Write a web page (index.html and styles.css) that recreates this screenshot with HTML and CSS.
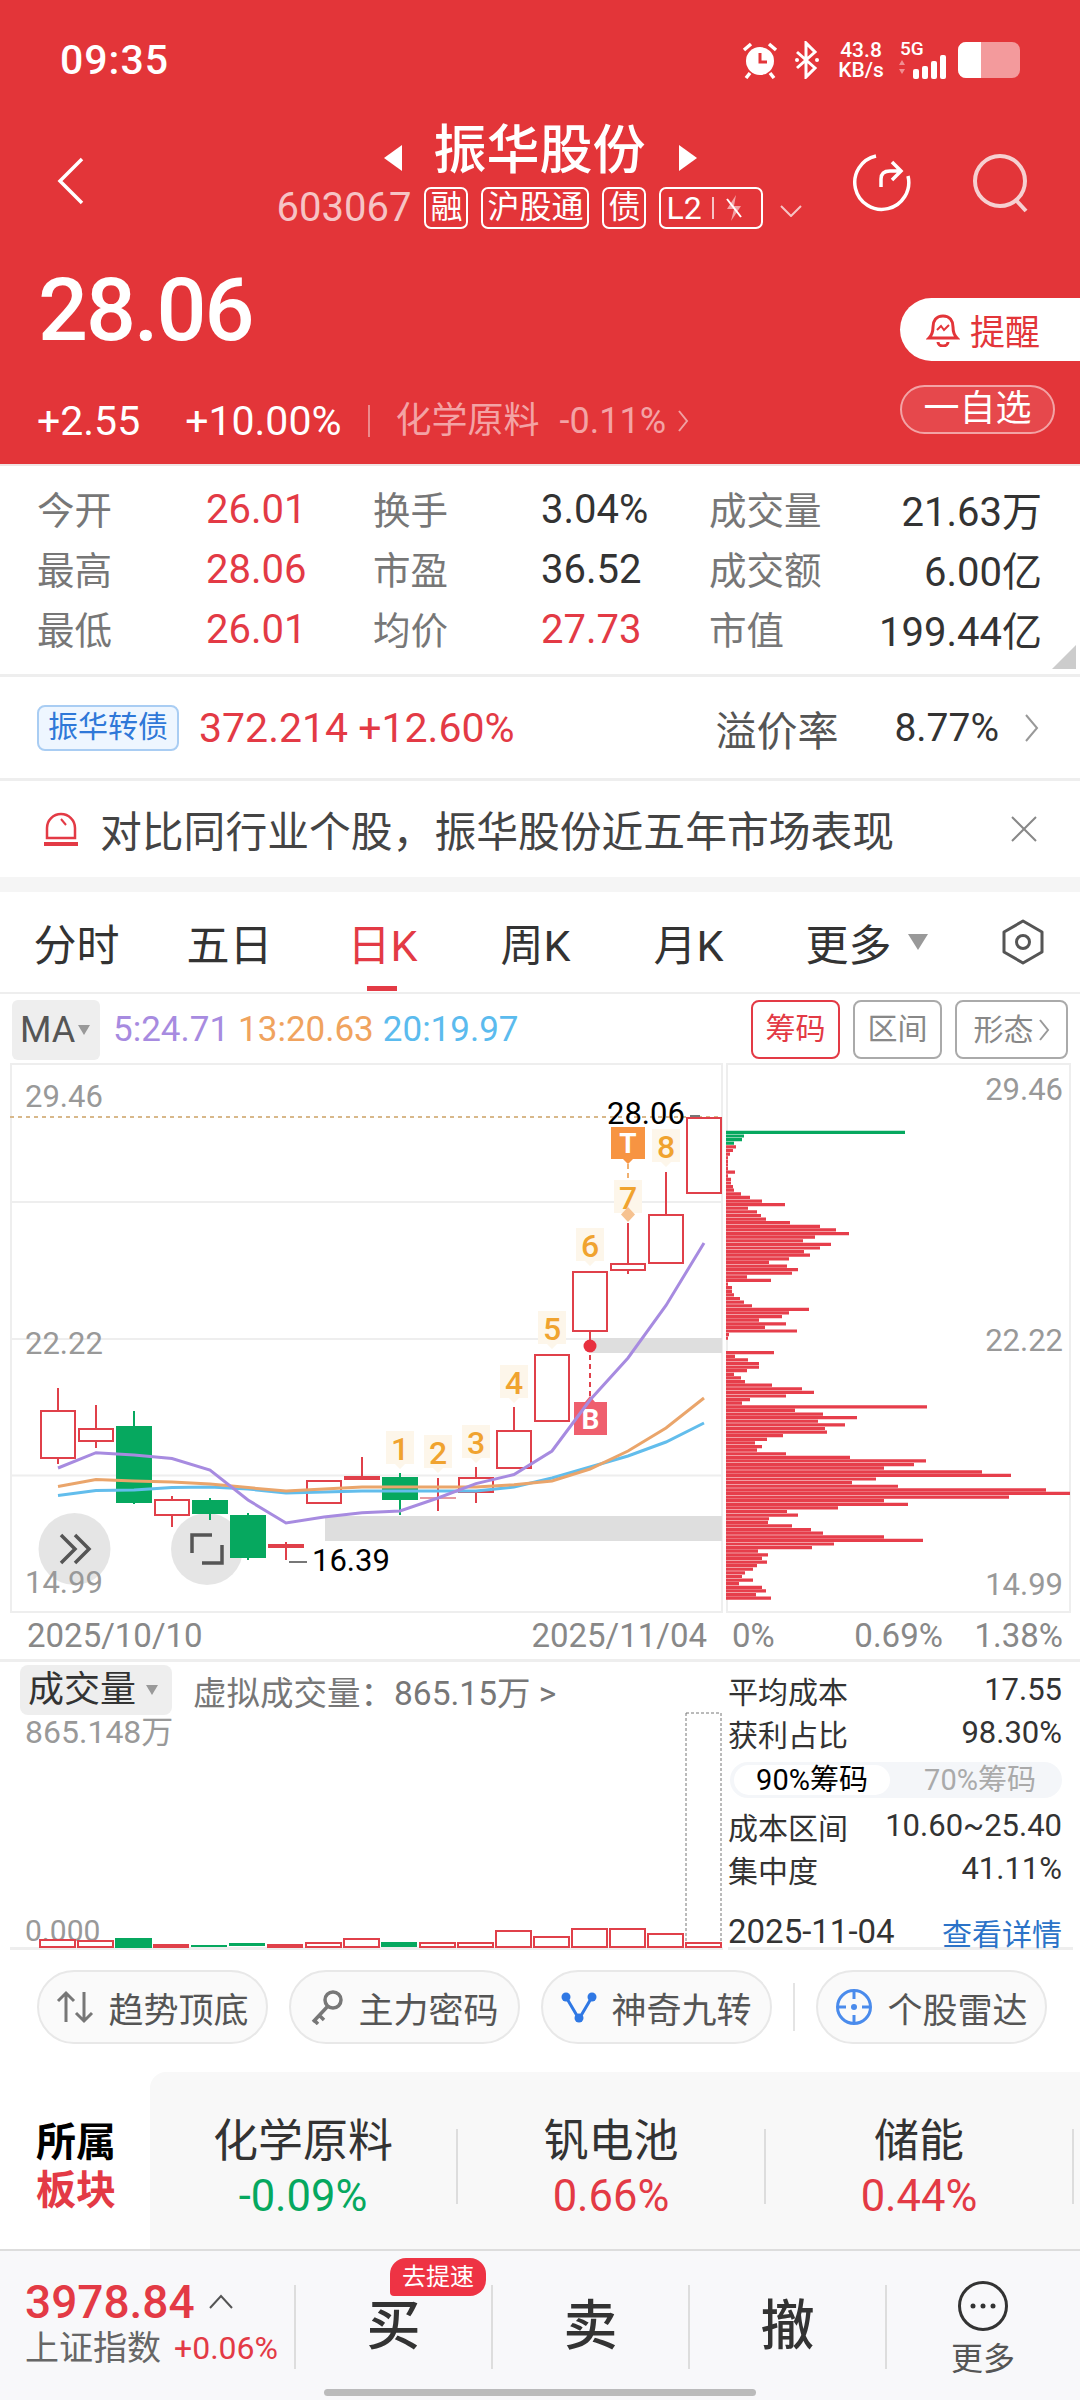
FILE: index.html
```html
<!DOCTYPE html>
<html lang="zh-CN">
<head>
    <meta charset="UTF-8">
    <meta name="viewport" content="width=device-width, initial-scale=1.0">
    <title>振华股份</title>
    <link rel="stylesheet" href="styles.css">
</head>
<body>
    <header class="top">
        <div class="status">
            <span class="clock">09:35</span>
            <div class="status-icons">
                <svg class="ic-alarm" width="38" height="38" viewBox="0 0 36 38"><circle cx="18" cy="20" r="14" fill="#fff"/><path d="M18 12v9h7" fill="none" stroke="#e33539" stroke-width="3"/><path d="M2 9l7-6M34 9l-7-6M8 32l-4 5M28 32l4 5" stroke="#fff" stroke-width="3.5" fill="none"/></svg>
                <svg class="ic-bt" width="26" height="38" viewBox="0 0 26 38"><path d="M3 11l18 16-9 9V2l9 9L3 27" fill="none" stroke="#fff" stroke-width="3"/><circle cx="3" cy="19" r="2" fill="#fff"/><circle cx="23" cy="19" r="2" fill="#fff"/></svg>
                <div class="speed"><b>43.8</b><b>KB/s</b></div>
                <div class="net">
                    <b>5G</b>
                    <svg width="54" height="24" viewBox="0 0 54 24"><path d="M1 10l3-5 3 5zM1 14l3 5 3-5z" fill="#f08f92"/><rect x="15" y="14" width="6" height="10" rx="2" fill="#fff"/><rect x="24" y="11" width="6" height="13" rx="2" fill="#fff"/><rect x="33" y="6" width="6" height="18" rx="2" fill="#fff"/><rect x="42" y="0" width="6" height="24" rx="2" fill="#fff"/></svg>
                </div>
                <div class="battery"><i></i></div>
            </div>
        </div>
        <div class="nav">
            <svg class="nav-back" width="28" height="48" viewBox="0 0 28 48"><path d="M25 2L3 24l22 22" fill="none" stroke="#fff" stroke-width="3.5"/></svg>
            <div class="nav-mid">
                <div class="title"><span class="tri-l"></span>振华股份<span class="tri-r"></span></div>
                <div class="sub">
                    <span class="code">603067</span>
                    <span class="tag">融</span>
                    <span class="tag">沪股通</span>
                    <span class="tag">债</span>
                    <span class="tag tag-l2">L2<em></em><svg width="20" height="28" viewBox="0 0 20 28"><path d="M12 1L3 15h7l-3 12 10-15h-7z" fill="#f4a0a3"/><path d="M3 5l14 18" stroke="#fff" stroke-width="2"/></svg></span>
                    <svg class="sub-caret" width="24" height="12" viewBox="0 0 24 12"><path d="M2 1l10 10L22 1" fill="none" stroke="#f6c4c5" stroke-width="2"/></svg>
                </div>
            </div>
            <div class="nav-right">
                <svg width="60" height="60" viewBox="0 0 60 60"><path d="M24 3a27 27 0 1 0 32 20" fill="none" stroke="#fff" stroke-width="3.5"/><path d="M29 34V26q0-8 9-8h9M40 9l9 9-9 9" fill="none" stroke="#fff" stroke-width="3.5"/></svg>
                <svg width="58" height="60" viewBox="0 0 58 60"><circle cx="28" cy="28" r="25" fill="none" stroke="#f6d0d1" stroke-width="4"/><path d="M43 46l11 12" stroke="#f6d0d1" stroke-width="4"/></svg>
            </div>
        </div>
        <div class="quote">
            <div class="quote-left">
                <div class="price">28.06</div>
                <div class="change">
                    <span>+2.55</span><span class="pct">+10.00%</span><em></em>
                    <span class="ind">化学原料</span><span class="ind-pct">-0.11%</span>
                    <svg width="12" height="24" viewBox="0 0 12 24"><path d="M2 2l8 10-8 10" fill="none" stroke="#f0a0a2" stroke-width="2"/></svg>
                </div>
            </div>
            <div class="quote-right">
                <div class="remind"><svg width="34" height="34" viewBox="0 0 34 34"><path d="M17 3c-7 0-10 5-10 11 0 5-1 8-4 11h28c-3-3-4-6-4-11 0-6-3-11-10-11z" fill="none" stroke="#e33539" stroke-width="3"/><path d="M12 29a5 4 0 0 0 10 0" fill="none" stroke="#e33539" stroke-width="3"/><path d="M11 17l4-4 3 4 5-5" fill="none" stroke="#e33539" stroke-width="2"/></svg>提醒</div>
                <div class="fav">一自选</div>
            </div>
        </div>
    </header>

    <section class="stats">
        <span class="lbl">今开</span><span class="red">26.01</span><span class="lbl">换手</span><span>3.04%</span><div class="last"><span class="lbl">成交量</span><span>21.63万</span></div>
        <span class="lbl">最高</span><span class="red">28.06</span><span class="lbl">市盈</span><span>36.52</span><div class="last"><span class="lbl">成交额</span><span>6.00亿</span></div>
        <span class="lbl">最低</span><span class="red">26.01</span><span class="lbl">均价</span><span class="red">27.73</span><div class="last"><span class="lbl">市值</span><span>199.44亿</span></div>
        <i class="corner"></i>
    </section>

    <section class="bond">
        <span class="bond-tag">振华转债</span>
        <span class="bond-val">372.214 +12.60%</span>
        <span class="bond-lbl">溢价率</span>
        <span class="bond-rate">8.77%</span>
        <svg width="16" height="30" viewBox="0 0 16 30"><path d="M2 2l11 13L2 28" fill="none" stroke="#999" stroke-width="2"/></svg>
    </section>

    <section class="notice">
        <svg width="38" height="40" viewBox="0 0 38 40"><path d="M5 29V19a14 14 0 0 1 28 0v10z" fill="none" stroke="#e33a45" stroke-width="2.5"/><path d="M2 35h34" stroke="#e33a45" stroke-width="4"/><path d="M19 10l5 6" stroke="#e33a45" stroke-width="2"/></svg>
        <span class="notice-text">对比同行业个股，振华股份近五年市场表现</span>
        <svg width="28" height="28" viewBox="0 0 28 28"><path d="M2 2l24 24M26 2L2 26" stroke="#888" stroke-width="2"/></svg>
    </section>

    <nav class="tabs">
        <span class="tab">分时</span>
        <span class="tab">五日</span>
        <span class="tab tab-on">日K</span>
        <span class="tab">周K</span>
        <span class="tab">月K</span>
        <span class="tab tab-more">更多<i class="caret"></i></span>
        <svg width="44" height="46" viewBox="0 0 44 46"><path d="M22 2l19 11v20L22 44 3 33V13z" fill="none" stroke="#555" stroke-width="3" stroke-linejoin="round"/><circle cx="22" cy="23" r="6.5" fill="none" stroke="#555" stroke-width="3"/></svg>
    </nav>

    <div class="ma-row">
        <div class="ma-box">MA<i class="caret caret-sm"></i></div>
        <span class="ma5">5:24.71</span>
        <span class="ma13">13:20.63</span>
        <span class="ma20">20:19.97</span>
        <div class="ma-btns">
            <span class="mbtn mbtn-on">筹码</span>
            <span class="mbtn">区间</span>
            <span class="mbtn mbtn-wide">形态<svg width="12" height="24" viewBox="0 0 12 24"><path d="M2 2l8 10-8 10" fill="none" stroke="#999" stroke-width="2"/></svg></span>
        </div>
    </div>

    <div class="kline">
        <svg class="kline-main" width="713" height="550" viewBox="10 1063 713 550">
            <rect class="frame" x="11" y="1064" width="711" height="548"/>
            <path class="grid" d="M10 1202H722M10 1339H722M10 1475.5H722"/>
            <path class="limit" d="M10 1117H722"/>
            <rect class="zone" x="325" y="1516" width="397" height="25"/>
            <rect class="zone" x="591" y="1338" width="131" height="15"/>
            <circle class="round" cx="74.5" cy="1549" r="36"/>
            <circle class="round" cx="207" cy="1549" r="36"/>
            <path class="wick-g" d="M134 1411V1504M210 1498V1520M248 1513V1560M400 1473V1515"/>
            <path class="wick-r" d="M58 1388V1411M58 1458V1464M96 1405V1429M96 1441V1448M172 1496V1500M172 1515V1527M286 1542V1560M362 1457V1476M438 1478V1511M476 1467V1478M476 1492V1503M514 1407V1431M590 1331V1340M628 1223V1264M628 1270V1274M666 1172V1215"/>
            <path class="wick-p" d="M420 1498H456"/>
            <g class="body-up">
                <rect x="41" y="1411" width="34" height="47"/>
                <rect x="79" y="1429" width="34" height="12"/>
                <rect x="155" y="1500" width="34" height="15"/>
                <rect x="307" y="1481" width="34" height="22"/>
                <rect x="459" y="1478" width="34" height="14"/>
                <rect x="497" y="1431" width="34" height="37"/>
                <rect x="535" y="1355" width="34" height="66"/>
                <rect x="573" y="1272" width="34" height="59"/>
                <rect x="611" y="1264" width="34" height="6"/>
                <rect x="649" y="1215" width="34" height="48"/>
                <rect x="687" y="1118" width="34" height="75"/>
            </g>
            <g class="body-red">
                <rect x="268" y="1544" width="36" height="4"/>
                <rect x="344" y="1476" width="36" height="4"/>
            </g>
            <g class="body-down">
                <rect x="116" y="1426" width="36" height="77"/>
                <rect x="192" y="1500" width="36" height="14"/>
                <rect x="230" y="1515" width="36" height="43"/>
                <rect x="382" y="1477" width="36" height="23"/>
            </g>
            <path class="dash-o" d="M628 1164V1208"/>
            <path class="dash-r" d="M590 1346V1398"/>
            <g transform="translate(400,1449)"><path class="tip" d="M-14-18h28v33h-9l-5 5-5-5h-9z"/><text class="seq" y="11">1</text></g>
            <g transform="translate(438,1453)"><path class="tip" d="M-14-18h28v33h-9l-5 5-5-5h-9z"/><text class="seq" y="11">2</text></g>
            <g transform="translate(476,1443)"><path class="tip" d="M-14-18h28v33h-9l-5 5-5-5h-9z"/><text class="seq" y="11">3</text></g>
            <g transform="translate(514,1383)"><path class="tip" d="M-14-18h28v33h-9l-5 5-5-5h-9z"/><text class="seq" y="11">4</text></g>
            <g transform="translate(552,1329)"><path class="tip" d="M-14-18h28v33h-9l-5 5-5-5h-9z"/><text class="seq" y="11">5</text></g>
            <g transform="translate(590,1246)"><path class="tip" d="M-14-18h28v33h-9l-5 5-5-5h-9z"/><text class="seq" y="11">6</text></g>
            <g transform="translate(628,1198)"><path class="tip" d="M-14-18h28v33h-9l-5 5-5-5h-9z"/><text class="seq" y="11">7</text></g>
            <g transform="translate(666,1147)"><path class="tip" d="M-14-18h28v33h-9l-5 5-5-5h-9z"/><text class="seq" y="11">8</text></g>
            <path class="diamond" d="M628 1207l7 7.500-7 7.500-7-7.500z"/>
            <path class="badge-t" d="M611 1127h34v32h-12l-5 5-5-5h-12z"/>
            <text class="badge-txt" x="628" y="1153">T</text>
            <circle class="dot-r" cx="590" cy="1346" r="6.500"/>
            <path class="badge-b" d="M574 1402h11l5-6 5 6h12v33h-33z"/>
            <text class="badge-txt" x="590.500" y="1429">B</text>
            <polyline class="ma-line l-blue" points="58,1495.600 96,1490.500 134,1490 172,1487.600 210,1487 248,1489 286,1493 324,1492 362,1491 400,1491 438,1491 476,1491 514,1487 552,1478 590,1467 628,1456 666,1442 704,1423"/>
            <polyline class="ma-line l-orange" points="58,1486.500 96,1479.600 134,1481 172,1482 210,1484 248,1487.600 286,1491 324,1489 362,1487 400,1487 438,1487 476,1487 514,1484.700 552,1481 590,1469 628,1451 666,1428 704,1398"/>
            <polyline class="ma-line l-purple" points="58,1468 96,1452.700 134,1455 172,1458.500 210,1470 248,1500 286,1523 324,1517 362,1512.700 400,1511 438,1498 476,1483.600 514,1474.500 552,1451 590,1400 628,1358 666,1305.500 704,1243"/>
            <path class="ic-more" d="M61 1535l14 14-14 14M75 1535l14 14-14 14"/>
            <path class="ic-more" d="M192 1553v-18h20M222 1545v18h-20"/>
            <text class="axis" x="25" y="1107">29.46</text>
            <text class="axis" x="25" y="1354">22.22</text>
            <text class="axis" x="25" y="1593">14.99</text>
            <text class="px" x="607" y="1124">28.06</text>
            <text class="px" x="312" y="1571">16.39</text>
            <path class="px-dash" d="M690 1116h10M289 1562h18"/>
        </svg>
        <svg class="kline-side" width="345" height="550" viewBox="726 1063 345 550">
            <rect class="frame" x="727" y="1064" width="343" height="548"/>
            <path class="prof-g" d="M726 1132.400h179m-179 3.610h18m-18 3.610h16m-16 3.610h8"/>
            <path class="prof-r" d="M726 1146.900h10m-10 3.610h7m-7 3.610h4m-4 3.610h2m-2 3.610h2m-2 3.610h2m-2 3.610h2m-2 3.610h9m-9 3.610h2m-2 3.610h5m-5 3.610h5m-5 3.610h7m-7 3.610h8m-8 3.610h15m-15 3.610h24m-24 3.610h36m-36 3.610h59m-59 3.610h22m-22 3.610h31m-31 3.610h35m-35 3.610h40m-40 3.610h64m-64 3.610h94m-94 3.610h110m-110 3.610h123m-123 3.610h89m-89 3.610h77m-77 3.610h105m-105 3.610h94m-94 3.610h78m-78 3.610h84m-84 3.610h63m-63 3.610h43m-43 3.610h61m-61 3.610h72m-72 3.610h66m-66 3.610h21m-21 3.610h45m-45 3.610h2m-2 3.610h6m-6 3.610h6m-6 3.610h8m-8 3.610h14m-14 3.610h18m-18 3.610h26m-26 3.610h83m-83 3.610h63m-63 3.610h56m-56 3.610h33m-33 3.610h60m-60 3.610h39m-39 3.610h71m-71 3.610h3m-3 3.610h2m-2 14.440h48m-48 3.610h9m-9 3.610h22m-22 3.610h33m-33 3.610h33m-33 3.610h21m-21 3.610h8m-8 3.610h15m-15 3.610h19m-19 3.610h46m-46 3.610h76m-76 3.610h88m-88 3.610h60m-60 3.610h24m-24 3.610h16m-16 3.610h201m-201 3.610h69m-69 3.610h97m-97 3.610h131m-131 3.610h92m-92 3.610h119m-119 3.610h99m-99 3.610h101m-101 3.610h57m-57 3.610h41m-41 3.610h29m-29 3.610h36m-36 3.610h31m-31 3.610h60m-60 3.610h124m-124 3.610h200m-200 3.610h188m-188 3.610h158m-158 3.610h256m-256 3.610h285m-285 3.610h150m-150 3.610h126m-126 3.610h172m-172 3.610h320m-320 3.610h344m-344 3.610h283m-283 3.610h158m-158 3.610h182m-182 3.610h112m-112 3.610h61m-61 3.610h72m-72 3.610h43m-43 3.610h42m-42 3.610h66m-66 3.610h85m-85 3.610h97m-97 3.610h158m-158 3.610h197m-197 3.610h108m-108 3.610h86m-86 3.610h32m-32 3.610h42m-42 3.610h36m-36 3.610h41m-41 3.610h31m-31 3.610h27m-27 3.610h19m-19 3.610h16m-16 3.610h27m-27 3.610h13m-13 3.610h36m-36 3.610h40m-40 3.610h30m-30 3.610h45"/>
            <text class="axis axis-r" x="1063" y="1100">29.46</text>
            <text class="axis axis-r" x="1063" y="1351">22.22</text>
            <text class="axis axis-r" x="1063" y="1595">14.99</text>
        </svg>
    </div>

    <div class="dates">
        <div class="dates-left"><span>2025/10/10</span><span>2025/11/04</span></div>
        <div class="dates-right"><span>0%</span><span class="dates-mid">0.69%</span><span>1.38%</span></div>
    </div>

    <div class="lower">
        <div class="vol">
            <div class="vol-head">
                <span class="vol-box">成交量<i class="caret caret-sm"></i></span>
                <span class="vol-virtual">虚拟成交量：865.15万 &gt;</span>
            </div>
            <svg class="vol-plot" width="713" height="289" viewBox="10 1660 713 289">
                <text class="axis axis-v" x="25" y="1743">865.148万</text>
                <text class="axis axis-z" x="25" y="1941">0.000</text>
                <rect class="vol-hl" x="686" y="1713" width="35" height="234"/>
                <g class="bar-up">
                    <rect x="40" y="1940" width="35" height="7"/><rect x="78" y="1941" width="35" height="6"/><rect x="306" y="1943" width="35" height="4"/><rect x="344" y="1939" width="35" height="8"/><rect x="420" y="1943" width="35" height="4"/><rect x="458" y="1943" width="35" height="4"/><rect x="496" y="1931" width="35" height="16"/><rect x="534" y="1937" width="35" height="10"/><rect x="572" y="1929" width="35" height="18"/><rect x="610" y="1929" width="35" height="18"/><rect x="648" y="1934" width="35" height="13"/><rect x="686" y="1943" width="35" height="4"/>
                </g>
                <g class="bar-red">
                    <rect x="153" y="1944" width="36" height="4"/><rect x="267" y="1944" width="36" height="4"/>
                </g>
                <g class="bar-down">
                    <rect x="115" y="1938" width="37" height="10"/><rect x="191" y="1945" width="36" height="2"/><rect x="229" y="1943" width="36" height="3"/><rect x="381" y="1942" width="36" height="5"/>
                </g>
            </svg>
        </div>
        <aside class="chip-info">
            <div class="ci-row"><span>平均成本</span><span>17.55</span></div>
            <div class="ci-row"><span>获利占比</span><span>98.30%</span></div>
            <div class="seg"><span class="seg-on">90%筹码</span><span>70%筹码</span></div>
            <div class="ci-row"><span>成本区间</span><span>10.60~25.40</span></div>
            <div class="ci-row"><span>集中度</span><span>41.11%</span></div>
            <div class="ci-row ci-foot"><span>2025-11-04</span><span class="ci-link">查看详情</span></div>
        </aside>
    </div>

    <div class="chips">
        <span class="chip"><svg width="38" height="34" viewBox="0 0 38 34"><path d="M10 32V3M2 11l8-8 8 8M28 2v29M20 23l8 8 8-8" fill="none" stroke="#777" stroke-width="3"/></svg>趋势顶底</span>
        <span class="chip"><svg width="34" height="36" viewBox="0 0 34 36"><circle cx="23" cy="11" r="8" fill="none" stroke="#777" stroke-width="3.5"/><path d="M18 17L3 33M9 26l5 5M4 31l4 4" fill="none" stroke="#777" stroke-width="3.5"/></svg>主力密码</span>
        <span class="chip"><svg width="36" height="34" viewBox="0 0 36 34"><path d="M5 7l13 22L31 7" fill="none" stroke="#2f78e4" stroke-width="3"/><circle cx="5" cy="7" r="4.500" fill="#2f78e4"/><circle cx="31" cy="7" r="4.500" fill="#2f78e4"/><circle cx="18" cy="28" r="4.500" fill="#2f78e4"/></svg>神奇九转</span>
        <i class="chip-sep"></i>
        <span class="chip"><svg width="38" height="38" viewBox="0 0 38 38"><circle cx="19" cy="19" r="16.500" fill="none" stroke="#4a8bec" stroke-width="3"/><path d="M19 2v9M19 27v9M2 19h9M27 19h9" stroke="#4a8bec" stroke-width="3"/><circle cx="19" cy="19" r="3" fill="#4a8bec"/></svg>个股雷达</span>
    </div>

    <section class="sectors">
        <div class="sec-title"><b>所属</b><b class="red">板块</b></div>
        <div class="sec-list">
            <div class="sec-item"><span class="sec-name">化学原料</span><span class="sec-pct green">-0.09%</span></div>
            <div class="sec-item"><span class="sec-name">钒电池</span><span class="sec-pct red">0.66%</span></div>
            <div class="sec-item"><span class="sec-name">储能</span><span class="sec-pct red">0.44%</span></div>
        </div>
    </section>

    <footer class="dock">
        <div class="dock-index">
            <div class="idx-top"><span class="idx-val">3978.84</span><svg width="26" height="16" viewBox="0 0 26 16"><path d="M2 14L13 2l11 12" fill="none" stroke="#555" stroke-width="2"/></svg></div>
            <div class="idx-sub"><span>上证指数</span><span class="idx-pct">+0.06%</span></div>
        </div>
        <div class="dock-btn">买<span class="speedup">去提速</span></div>
        <div class="dock-btn">卖</div>
        <div class="dock-btn">撤</div>
        <div class="dock-more">
            <svg width="50" height="50" viewBox="0 0 50 50"><circle cx="25" cy="25" r="23.500" fill="none" stroke="#333" stroke-width="3"/><circle cx="15" cy="25" r="2.500" fill="#333"/><circle cx="25" cy="25" r="2.500" fill="#333"/><circle cx="35" cy="25" r="2.500" fill="#333"/></svg>
            <span>更多</span>
        </div>
        <i class="home-bar"></i>
    </footer>
</body>
</html>
```

FILE: styles.css
```css
:root {
    --red: #e33a45;
    --head: #e33539;
    --green: #06a85f;
    --line: #eeeeee;
    --label: #777;
    --text: #333;
}
* {
    box-sizing: border-box;
}
body {
    width: 1080px;
    height: 2400px;
    margin: 0;
    overflow: hidden;
    background: #fff;
    color: var(--text);
    font-family: Roboto, "Noto Sans CJK SC", sans-serif;
}
svg {
    display: block;
    flex: none;
}
.red {
    color: var(--red);
}
.green {
    color: var(--green);
}

/* red header */
.top {
    height: 466px;
    background: var(--head);
    color: #fff;
    border-bottom: 2px solid #efe4e4;
}
.status {
    height: 112px;
    padding: 40px 60px 0 60px;
    display: flex;
    justify-content: space-between;
}
.clock {
    font-size: 41px;
    line-height: 40px;
    font-weight: 500;
    letter-spacing: 1px;
}
.status-icons {
    display: flex;
    height: 40px;
    align-items: center;
}
.ic-bt {
    margin-left: 15px;
}
.speed {
    width: 50px;
    margin-left: 16px;
    display: flex;
    flex-direction: column;
    align-items: center;
}
.speed b {
    font-size: 21px;
    line-height: 20px;
    font-weight: 500;
}
.net {
    width: 54px;
    margin-left: 12px;
    height: 38px;
    position: relative;
}
.net b {
    position: absolute;
    left: 2px;
    top: 0;
    font-size: 19px;
    line-height: 16px;
    font-weight: 500;
}
.net svg {
    position: absolute;
    left: 0;
    bottom: 0;
}
.battery {
    width: 62px;
    height: 36px;
    margin-left: 6px;
    border-radius: 8px;
    background: #f39a9c;
    overflow: hidden;
}
.battery i {
    display: block;
    width: 23px;
    height: 36px;
    background: #fff;
}
.nav {
    height: 120px;
    padding: 0 50px 0 57px;
    display: flex;
    align-items: center;
}
.nav-back {
    margin-top: 18px;
}
.nav-mid {
    width: 580px;
    margin-left: 165px;
    display: flex;
    flex-direction: column;
    align-items: center;
}
.title {
    height: 60px;
    margin-top: 5px;
    font-size: 53px;
    line-height: 60px;
    font-weight: 500;
    display: flex;
    align-items: center;
}
.tri-l,
.tri-r {
    width: 0;
    height: 0;
    margin-top: 14px;
    border-top: 13px solid transparent;
    border-bottom: 13px solid transparent;
}
.tri-l {
    margin-right: 32px;
    border-right: 18px solid #fff;
}
.tri-r {
    margin-left: 33px;
    border-left: 18px solid #fff;
}
.sub {
    margin-top: 6px;
    height: 42px;
    display: flex;
    align-items: center;
    gap: 13px;
}
.code {
    font-size: 40px;
    color: #f6c4c5;
}
.tag {
    height: 42px;
    padding: 0 4px;
    border: 2px solid #fff;
    border-radius: 7px;
    font-size: 32px;
    line-height: 36px;
    white-space: nowrap;
}
.tag-l2 {
    display: flex;
    align-items: center;
    width: 104px;
    padding: 0 0 0 5px;
}
.tag-l2 em {
    width: 2px;
    height: 22px;
    margin: 0 10px;
    background: #f6c4c5;
}
.sub-caret {
    margin: 6px 0 0 3px;
}
.nav-right {
    margin-left: 22px;
    width: 178px;
    margin-top: 22px;
    display: flex;
    justify-content: space-between;
}
.quote {
    height: 232px;
    display: flex;
    justify-content: space-between;
}
.price {
    margin: 28px 0 0 38px;
    font-size: 88px;
    line-height: 100px;
    font-weight: 500;
    letter-spacing: -2px;
}
.change {
    margin: 39px 0 0 37px;
    display: flex;
    align-items: center;
    font-size: 41px;
    line-height: 44px;
}
.pct {
    margin-left: 45px;
}
.change em {
    width: 2px;
    height: 32px;
    margin: 0 25px 0 27px;
    background: #ec8a8c;
}
.ind {
    color: #f3a3a5;
    font-size: 36px;
}
.ind-pct {
    margin: 0 11px 0 20px;
    color: #f3a3a5;
    font-size: 36px;
}
.quote-right {
    width: 180px;
    padding-top: 66px;
}
.remind {
    height: 63px;
    padding-left: 26px;
    background: #fff;
    border-radius: 32px 0 0 32px;
    color: var(--head);
    font-size: 35px;
    display: flex;
    align-items: center;
    gap: 10px;
}
.fav {
    width: 155px;
    height: 49px;
    margin-top: 24px;
    border: 2px solid #f3a3a5;
    border-radius: 25px;
    background: #e6484c;
    font-size: 36px;
    line-height: 44px;
    text-align: center;
}

/* quote table */
.stats {
    height: 211px;
    padding: 13px 0 0 37px;
    display: grid;
    grid-template-columns: 169px 167px 168px 168px 333px;
    grid-auto-rows: 60px;
    align-items: center;
    border-bottom: 3px solid var(--line);
    position: relative;
    font-size: 40px;
}
.lbl {
    margin-bottom: 3px;
    color: var(--label);
    font-size: 37.500px;
}
.last {
    display: flex;
    justify-content: space-between;
    align-items: center;
}
.corner {
    position: absolute;
    right: 4px;
    bottom: 5px;
    border-left: 24px solid transparent;
    border-bottom: 24px solid #ccc;
}
.bond {
    height: 104px;
    padding: 0 40px 0 37px;
    display: flex;
    align-items: center;
    border-bottom: 3px solid var(--line);
}
.bond-tag {
    width: 142px;
    height: 46px;
    border: 2px solid #a9cdf3;
    border-radius: 8px;
    background: #eef6ff;
    color: #2f78d8;
    font-size: 30px;
    line-height: 40px;
    text-align: center;
}
.bond-val {
    margin-left: 20px;
    color: var(--red);
    font-size: 41px;
}
.bond-lbl {
    margin-left: auto;
    color: #555;
    font-size: 41px;
}
.bond-rate {
    margin: 0 25px 0 56px;
    font-size: 39px;
}
.notice {
    height: 96px;
    padding: 0 42px;
    display: flex;
    align-items: center;
}
.notice-text {
    margin-left: 20px;
    flex: 1;
    color: #444;
    font-size: 41.800px;
    white-space: nowrap;
}

/* tabs */
.tabs {
    height: 117px;
    border-top: 15px solid #f5f5f5;
    border-bottom: 2px solid var(--line);
    display: flex;
    align-items: center;
}
.tab {
    width: 153px;
    text-align: center;
    font-size: 43px;
    color: #333;
    position: relative;
}
.tab-on {
    color: var(--red);
}
.tab-on::after {
    content: "";
    position: absolute;
    left: 61px;
    bottom: -18px;
    width: 30px;
    height: 5px;
    background: var(--red);
}
.tab-more {
    width: 203px;
    margin-right: 33px;
    display: flex;
    justify-content: center;
    align-items: center;
    gap: 16px;
}
.caret {
    border-top: 16px solid #999;
    border-left: 10px solid transparent;
    border-right: 10px solid transparent;
}
.caret-sm {
    border-top-width: 10px;
    border-left-width: 6px;
    border-right-width: 6px;
}

/* ma legend */
.ma-row {
    height: 69px;
    padding: 2px 12px 0;
    display: flex;
    align-items: center;
    font-size: 35px;
}
.ma-box {
    width: 88px;
    height: 60px;
    margin-right: 13px;
    padding-left: 8px;
    border-radius: 6px;
    background: #eee;
    color: #555;
    font-size: 36px;
    display: flex;
    align-items: center;
    gap: 3px;
}
.ma5 {
    color: #a78be0;
}
.ma13 {
    margin-left: 9px;
    color: #f0a35e;
}
.ma20 {
    margin-left: 9px;
    color: #5bbbee;
}
.ma-btns {
    margin-left: auto;
    display: flex;
    gap: 13px;
}
.mbtn {
    width: 89px;
    height: 59px;
    border: 2px solid #aaa;
    border-radius: 8px;
    color: #888;
    font-size: 30px;
    line-height: 54px;
    text-align: center;
}
.mbtn-on {
    border-color: var(--red);
    color: var(--red);
}
.mbtn-wide {
    width: 113px;
    display: flex;
    align-items: center;
    justify-content: center;
    gap: 4px;
}

/* candle chart */
.kline {
    height: 550px;
    padding-left: 10px;
    display: flex;
    gap: 3px;
}
.frame {
    fill: #fff;
    stroke: var(--line);
    stroke-width: 2;
}
.grid {
    stroke: var(--line);
    stroke-width: 2;
    fill: none;
}
.limit {
    stroke: #d8b88a;
    stroke-width: 2;
    stroke-dasharray: 4 4;
    fill: none;
}
.zone {
    fill: #dedede;
}
.round {
    fill: rgba(0, 0, 0, 0.1);
}
.wick-g {
    stroke: var(--green);
    stroke-width: 2;
}
.wick-r,
.wick-p {
    stroke: #e0404a;
    stroke-width: 2;
}
.wick-p {
    stroke: #e79aa0;
}
.body-up rect,
.bar-up rect {
    fill: #fff;
    stroke: #e0404a;
    stroke-width: 2;
}
.body-red rect,
.bar-red rect {
    fill: #e0404a;
}
.body-down rect,
.bar-down rect {
    fill: var(--green);
}
.tip {
    fill: #fdf6ea;
}
.seq {
    fill: #f0a32f;
    font-size: 32px;
    font-weight: 500;
    text-anchor: middle;
}
.dash-o,
.dash-r {
    stroke-width: 2;
    stroke-dasharray: 5 4;
    fill: none;
}
.dash-o {
    stroke: #f0b070;
}
.dash-r {
    stroke: #e0404a;
}
.diamond {
    fill: #f6c290;
}
.badge-t {
    fill: #f79442;
}
.badge-b {
    fill: #ef5f6e;
}
.dot-r {
    fill: #e8303f;
}
.badge-txt {
    fill: #fff;
    font-size: 28px;
    font-weight: 700;
    text-anchor: middle;
}
.ma-line {
    fill: none;
    stroke-width: 3;
}
.l-purple {
    stroke: #a78be0;
}
.l-orange {
    stroke: #eaa56b;
}
.l-blue {
    stroke: #62bdec;
}
.ic-more {
    fill: none;
    stroke: #555;
    stroke-width: 3.500;
}
.axis {
    fill: #999;
    font-size: 31px;
}
.axis-r {
    text-anchor: end;
}
.px {
    fill: #000;
    font-size: 31px;
}
.px-dash {
    stroke: #777;
    stroke-width: 2;
}
.prof-g,
.prof-r {
    fill: none;
    stroke-width: 3.200;
}
.prof-g {
    stroke: var(--green);
}
.prof-r {
    stroke: #e63e4b;
}
.dates {
    height: 49px;
    padding: 0 17px 0 27px;
    display: flex;
    color: #888;
    font-size: 33px;
    line-height: 46px;
    border-bottom: 3px solid var(--line);
}
.dates-left {
    width: 680px;
    display: flex;
    justify-content: space-between;
}
.dates-right {
    flex: 1;
    margin-left: 25px;
    display: flex;
    justify-content: space-between;
}
.dates-mid {
    margin-left: 48px;
}

/* volume + chips */
.lower {
    height: 290px;
    padding-left: 10px;
    display: flex;
    gap: 5px;
}
.vol {
    width: 713px;
    height: 288px;
    position: relative;
    border-bottom: 3px solid var(--line);
}
.vol-plot {
    position: absolute;
    left: 0;
    top: -2px;
}
.vol-head {
    position: relative;
    z-index: 1;
    display: flex;
    align-items: center;
    padding: 3px 0 0 10px;
}
.vol-box {
    width: 152px;
    height: 50px;
    padding-left: 8px;
    border-radius: 8px;
    background: #eee;
    font-size: 36px;
    line-height: 50px;
    display: flex;
    align-items: center;
    gap: 10px;
}
.vol-virtual {
    margin-left: 21px;
    color: #777;
    font-size: 33.500px;
}
.axis-v {
    font-size: 32px;
}
.axis-z {
    font-size: 30px;
}
.vol-hl {
    fill: none;
    stroke: #777;
    stroke-width: 1;
    stroke-dasharray: 3 2;
}
.chip-info {
    width: 345px;
    height: 288px;
    padding: 6px 11px 0 0;
    border-bottom: 3px solid var(--line);
    font-size: 31px;
}
.ci-row {
    height: 43px;
    display: flex;
    justify-content: space-between;
    align-items: center;
    color: #333;
}
.ci-row span:first-child {
    font-size: 30px;
}
.seg {
    height: 36px;
    margin: 8px 0 6px 2px;
    padding: 3px 4px;
    border-radius: 18px;
    background: #f4f6f9;
    display: flex;
    font-size: 29px;
    line-height: 30px;
    color: #aaa;
    align-items: center;
}
.seg span {
    width: 158px;
    text-align: center;
    margin-left: 12px;
}
.seg .seg-on {
    height: 30px;
    margin-left: 0;
    border-radius: 15px;
    background: #fff;
    color: #000;
}
.ci-foot {
    margin-top: 20px;
}
.ci-foot span:first-child {
    font-size: 33px;
}
.ci-link {
    color: #2b73c8;
    font-size: 30px;
}

/* shortcut chips */
.chips {
    height: 120px;
    padding: 18px 0 0 37px;
    display: flex;
    align-items: flex-start;
    gap: 21px;
}
.chip {
    width: 231px;
    height: 74px;
    border: 2px solid #e8e8e8;
    border-radius: 37px;
    background: #fafafa;
    color: #555;
    font-size: 35px;
    display: flex;
    align-items: center;
    justify-content: center;
    gap: 14px;
    white-space: nowrap;
}
.chip-sep {
    width: 2px;
    height: 48px;
    margin-top: 13px;
    background: #e4e4e4;
}
.sectors {
    height: 177px;
    display: flex;
}
.sec-title {
    width: 150px;
    padding: 47px 0 0 36px;
    font-size: 40px;
    line-height: 48px;
    display: flex;
    flex-direction: column;
    color: #000;
}
.sec-list {
    flex: 1;
    padding-top: 57px;
    background: #f8f8f8;
    border-top-left-radius: 16px;
    display: flex;
    align-items: flex-start;
}
.sec-item {
    width: 308px;
    height: 75px;
    border-right: 2px solid #ddd;
    display: flex;
    flex-direction: column;
    align-items: center;
}
.sec-name {
    margin-top: -12px;
    font-size: 45px;
    line-height: 50px;
}
.sec-pct {
    margin-top: 5px;
    font-size: 43.500px;
    line-height: 50px;
}
.dock {
    height: 151px;
    padding-top: 34px;
    border-top: 2px solid #ddd;
    background: #f8f8fa;
    display: flex;
    align-items: flex-start;
    position: relative;
}
.dock-index {
    width: 294px;
    height: 84px;
    padding-left: 25px;
}
.idx-top {
    margin-top: -3px;
    display: flex;
    align-items: center;
    gap: 13px;
    height: 40px;
}
.idx-val {
    color: var(--red);
    font-size: 46px;
    font-weight: 500;
}
.idx-sub {
    margin-top: 4px;
    display: flex;
    align-items: center;
    gap: 13px;
    color: #666;
    font-size: 34px;
    line-height: 44px;
}
.idx-pct {
    color: var(--red);
    font-size: 32px;
}
.dock-btn {
    width: 197px;
    height: 84px;
    border-left: 2px solid #ddd;
    font-size: 54px;
    font-weight: 500;
    line-height: 84px;
    text-align: center;
    position: relative;
}
.speedup {
    position: absolute;
    left: 94px;
    top: -27px;
    width: 96px;
    height: 38px;
    border-radius: 16px 16px 16px 4px;
    background: #ee3344;
    color: #fff;
    font-size: 24px;
    font-weight: 400;
    line-height: 38px;
}
.dock-more {
    width: 194px;
    height: 84px;
    border-left: 2px solid #ddd;
    display: flex;
    flex-direction: column;
    align-items: center;
    font-size: 32px;
    color: #555;
}
.dock-more span {
    line-height: 44px;
    margin-top: 6px;
}
.dock-more svg {
    margin-top: -4px;
}
.home-bar {
    position: absolute;
    left: 324px;
    bottom: 4px;
    width: 432px;
    height: 7px;
    border-radius: 4px;
    background: #bbb;
}
```
